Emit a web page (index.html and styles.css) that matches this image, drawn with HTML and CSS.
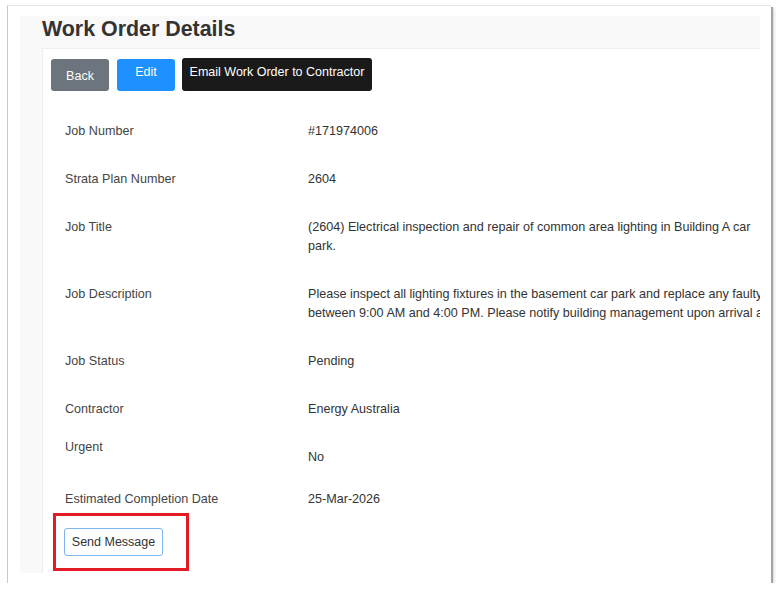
FILE: index.html
```html
<!DOCTYPE html>
<html lang="en">
<head>
<meta charset="utf-8">
<title>Work Order Details</title>
<link rel="stylesheet" href="styles.css">
</head>
<body>
<div class="shot">
  <div class="page">
    <h1 class="page-title">Work Order Details</h1>
    <div class="card">
      <div class="actions">
        <button class="btn btn-back">Back</button>
        <button class="btn btn-edit">Edit</button>
        <button class="btn btn-email">Email Work Order to Contractor</button>
      </div>
      <div class="details">
        <div class="row">
          <div class="label">Job Number</div>
          <div class="value">#171974006</div>
        </div>
        <div class="row">
          <div class="label">Strata Plan Number</div>
          <div class="value">2604</div>
        </div>
        <div class="row">
          <div class="label">Job Title</div>
          <div class="value">(2604) Electrical inspection and repair of common area lighting in Building A car park.</div>
        </div>
        <div class="row">
          <div class="label">Job Description</div>
          <div class="value value-multi">
            <span class="line">Please inspect all lighting fixtures in the basement car park and replace any faulty lights.</span>
            <span class="line">between 9:00 AM and 4:00 PM. Please notify building management upon arrival and departure.</span>
          </div>
        </div>
        <div class="row">
          <div class="label">Job Status</div>
          <div class="value">Pending</div>
        </div>
        <div class="row row-short">
          <div class="label">Contractor</div>
          <div class="value">Energy Australia</div>
        </div>
        <div class="row row-urgent">
          <div class="label">Urgent</div>
          <div class="value value-low">No</div>
        </div>
        <div class="row row-last">
          <div class="label">Estimated Completion Date</div>
          <div class="value">25-Mar-2026</div>
        </div>
      </div>
      <div class="highlight">
        <button class="btn btn-message">Send Message</button>
      </div>
    </div>
  </div>
</div>
</body>
</html>
```
FILE: styles.css
```css
* {
  box-sizing: border-box;
}

html, body {
  margin: 0;
  padding: 0;
  background: #ffffff;
}

body {
  font-family: "Liberation Sans", Arial, sans-serif;
  color: #333333;
}

.shot {
  margin: 5px 0 0 7px;
  width: 764px;
  height: 578px;
  background: #ffffff;
  border-top: 1px solid #e4e4e4;
  border-left: 1px solid #c9c9c9;
  box-shadow: 2px 2px 0 #a3a3a3, 3px 3px 3px rgba(0, 0, 0, 0.18);
  padding: 10px 11px 10px 12px;
  overflow: hidden;
}

.page {
  height: 100%;
  background: #f9f9fa;
  display: flex;
  flex-direction: column;
  overflow: hidden;
}

.page-title {
  margin: 0;
  height: 32px;
  padding-left: 22px;
  font-size: 21.4px;
  line-height: 27px;
  font-weight: bold;
  color: #333333;
}

.card {
  flex: 1;
  margin-left: 22px;
  background: #ffffff;
  border-top: 1px solid #eceef4;
  border-left: 1px solid #eceef4;
  padding: 10px 0 0 8px;
  display: flex;
  flex-direction: column;
  min-width: 0;
}

.actions {
  display: flex;
  align-items: flex-start;
  gap: 8px;
}

.btn {
  font-family: "Liberation Sans", Arial, sans-serif;
  font-size: 12.5px;
  border: none;
  border-radius: 3px;
  margin: 0;
  cursor: pointer;
}

.btn-back {
  width: 58px;
  height: 32px;
  background: #6c757d;
  color: #ffffff;
  padding: 3px 0 0;
  line-height: 15px;
}

.btn-edit {
  width: 58px;
  height: 32px;
  background: #1e90ff;
  color: #ffffff;
  line-height: 15px;
  display: flex;
  justify-content: center;
  align-items: flex-start;
  padding: 6px 0 0;
}

.btn-email {
  width: 190px;
  height: 33px;
  margin-left: -1px;
  margin-top: -1px;
  background: #1a1a1a;
  color: #ffffff;
  line-height: 15px;
  display: flex;
  justify-content: center;
  align-items: flex-start;
  padding: 7px 0 0;
}

.details {
  margin-top: 16px;
}

.row {
  display: flex;
  padding: 15px 0 14px 14px;
  font-size: 12.6px;
  line-height: 19px;
}

.row-short {
  padding-bottom: 4px;
}

.row-urgent {
  padding-bottom: 8px;
}

.row-last {
  padding-bottom: 4px;
}

.label {
  width: 243px;
  flex: none;
  color: #454545;
}

.value {
  width: 462px;
  flex: none;
  color: #333333;
}

.value-multi .line {
  display: block;
  white-space: nowrap;
}

.value-low {
  margin-top: 10px;
}

.highlight {
  align-self: flex-start;
  margin-left: 2px;
  border: 3px solid #e21b23;
  padding: 12px 23px 12px 8px;
}

.btn-message {
  display: block;
  width: 99px;
  height: 28px;
  background: #ffffff;
  border: 1px solid #7db5f0;
  color: #333333;
  padding: 0;
  line-height: 16px;
}
```
